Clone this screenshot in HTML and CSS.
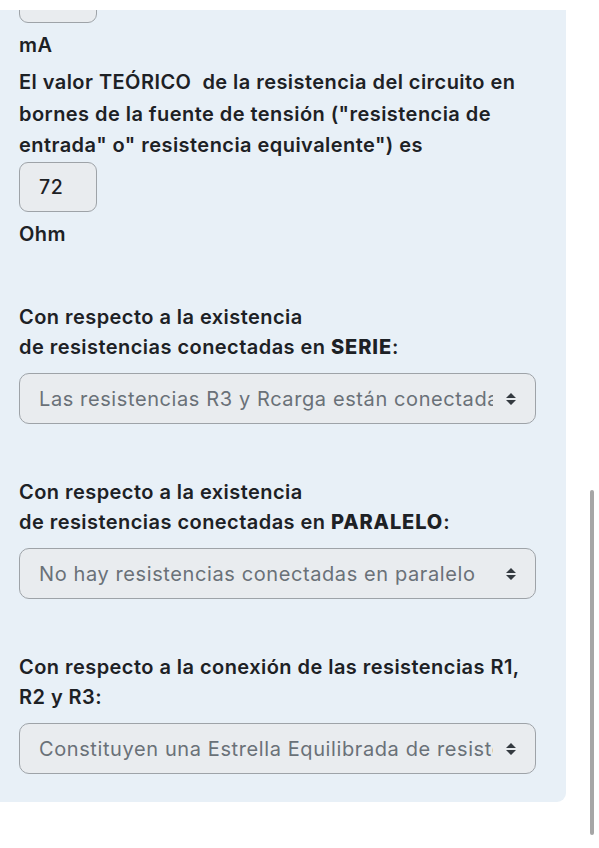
FILE: index.html
```html
<!DOCTYPE html>
<html lang="es">
<head>
<meta charset="utf-8">
<title>Resistencias</title>
<link rel="stylesheet" href="styles.css">
</head>
<body>
<div class="panel">
  <div class="field cut"></div>
  <div class="unit">mA</div>
  <p class="question">El valor TEÓRICO&nbsp; de la resistencia del circuito en bornes de la fuente de tensión ("resistencia de entrada" o" resistencia equivalente") es</p>
  <div class="field"><span>72</span></div>
  <div class="unit">Ohm</div>

  <div class="group">
    <p class="label">Con respecto a la existencia<br>de resistencias conectadas en <strong>SERIE</strong>:</p>
    <div class="select">
      <span class="select-text">Las resistencias R3 y Rcarga están conectadas en serie</span>
      <svg class="arrows" width="12" height="14" viewBox="0 0 12 14"><path d="M1 6 L6 1 L11 6 Z M1 8 L6 13 L11 8 Z"/></svg>
    </div>
  </div>

  <div class="group">
    <p class="label">Con respecto a la existencia<br>de resistencias conectadas en <strong>PARALELO</strong>:</p>
    <div class="select">
      <span class="select-text">No hay resistencias conectadas en paralelo</span>
      <svg class="arrows" width="12" height="14" viewBox="0 0 12 14"><path d="M1 6 L6 1 L11 6 Z M1 8 L6 13 L11 8 Z"/></svg>
    </div>
  </div>

  <div class="group">
    <p class="label">Con respecto a la conexión de las resistencias R1, R2 y R3:</p>
    <div class="select">
      <span class="select-text">Constituyen una Estrella Equilibrada de resistencias</span>
      <svg class="arrows" width="12" height="14" viewBox="0 0 12 14"><path d="M1 6 L6 1 L11 6 Z M1 8 L6 13 L11 8 Z"/></svg>
    </div>
  </div>
</div>
<div class="scrollbar"></div>
</body>
</html>
```

FILE: styles.css
```css
html, body {
  margin: 0;
  padding: 0;
  background: #ffffff;
}

body {
  font-family: Inter, "Noto Sans", "Liberation Sans", sans-serif;
  color: #1d2125;
  height: 848px;
  overflow: hidden;
}

.panel {
  margin-top: 10px;
  width: 566px;
  box-sizing: border-box;
  padding: 0 30px 28px 19px;
  background: #e8f0f7;
  border-bottom-right-radius: 9px;
  overflow: hidden;
}

.field {
  width: 78px;
  height: 50px;
  box-sizing: border-box;
  border: 1px solid #9ea3a8;
  border-radius: 9px;
  background: #e9ecef;
  display: flex;
  align-items: center;
  padding-left: 19px;
  font-size: 19.5px;
  font-weight: 500;
  letter-spacing: 0.5px;
  color: #1d2125;
}

.field.cut {
  margin-top: -37px;
}

.unit {
  margin-top: 7px;
  font-size: 20px;
  font-weight: 600;
  letter-spacing: 0.45px;
  line-height: 30px;
}

.question {
  margin: 7px 0 0;
  font-size: 20px;
  font-weight: 600;
  letter-spacing: 0.45px;
  line-height: 31.7px;
}

.group {
  margin-top: 53px;
}

.label {
  margin: 0;
  font-size: 20px;
  font-weight: 600;
  letter-spacing: 0.45px;
  line-height: 30px;
}

.label strong {
  font-weight: 800;
  letter-spacing: 0.9px;
}

.select {
  margin-top: 11px;
  height: 51px;
  box-sizing: border-box;
  border: 1px solid #9ea3a8;
  border-radius: 10px;
  background: #e9ecef;
  display: flex;
  align-items: center;
  padding: 0 18px 0 19px;
  gap: 12px;
}

.select-text {
  flex: 1;
  overflow: hidden;
  white-space: nowrap;
  font-size: 20px;
  font-weight: 400;
  letter-spacing: 0.6px;
  color: #6a7178;
}

.arrows {
  flex: none;
  fill: #343a40;
}

.scrollbar {
  position: fixed;
  left: 590px;
  top: 490px;
  width: 4px;
  height: 345px;
  border-radius: 2px;
  background: #a6a6a6;
}
```
